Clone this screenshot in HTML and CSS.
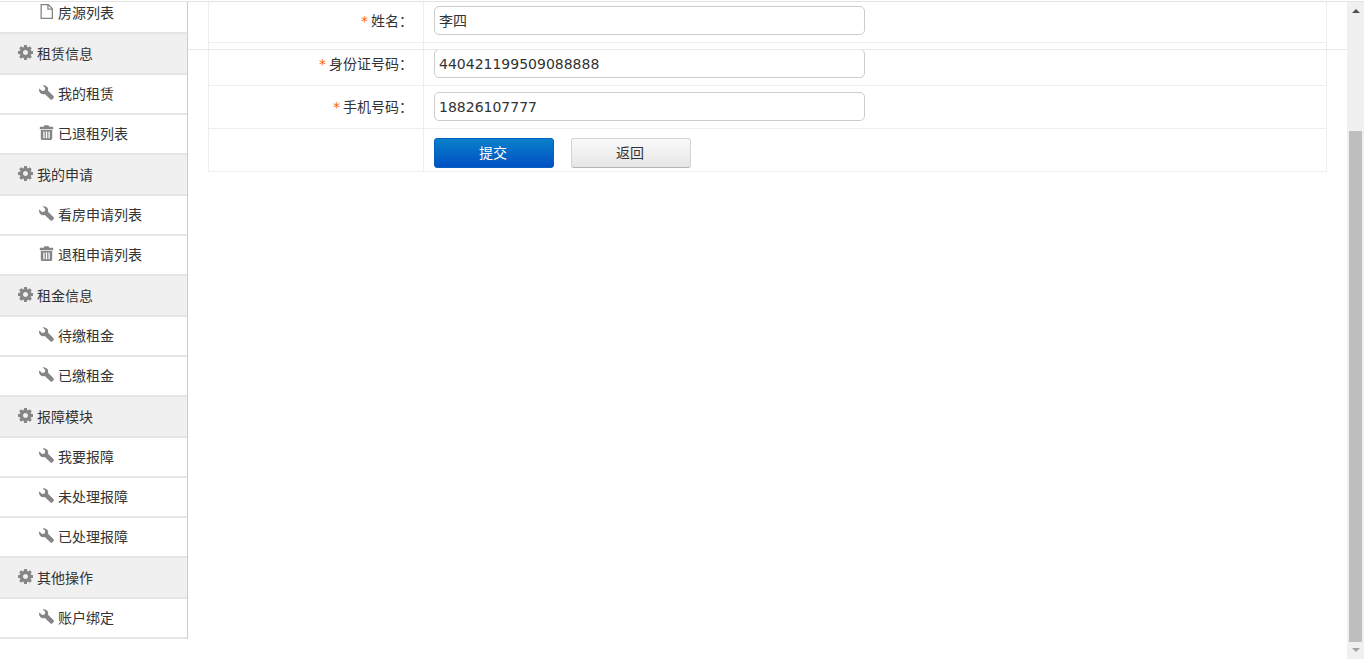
FILE: index.html
```html
<!DOCTYPE html>
<html lang="zh-CN">
<head>
<meta charset="utf-8">
<title>修改信息</title>
<link rel="stylesheet" href="styles.css">
</head>
<body>
<svg class="defs" width="0" height="0" aria-hidden="true">
  <symbol id="i-gear" viewBox="128 128 1536 1536"><path d="M1152 896q0-106-75-181t-181-75-181 75-75 181 75 181 181 75 181-75 75-181zm512-109v222q0 12-8 23t-20 13l-185 28q-19 54-39 91 35 50 107 138 10 12 10 25t-9 23q-27 37-99 108t-94 71q-12 0-26-9l-138-108q-44 23-91 38-16 136-29 186-7 28-36 28h-222q-14 0-24.500-8.500t-11.500-21.500l-28-184q-49-16-90-37l-141 107q-10 9-25 9-14 0-25-11-126-114-165-168-7-10-7-23 0-12 8-23 15-21 51-66.500t54-70.500q-27-50-41-99l-183-27q-13-2-21-12.500t-8-23.500v-222q0-12 8-23t19-13l186-28q14-46 39-92-40-57-107-138-10-12-10-24 0-10 9-23 26-36 98.500-107.500t94.500-71.500q13 0 26 10l138 107q44-23 91-38 16-136 29-186 7-28 36-28h222q14 0 24.500 8.500t11.500 21.500l28 184q49 16 90 37l142-107q9-9 24-9 13 0 25 10 129 119 165 170 7 8 7 22 0 12-8 23-15 21-51 66.500t-54 70.500q26 50 41 98l183 28q13 2 21 12.500t8 23.500z"/></symbol>
  <symbol id="i-wrench" viewBox="0 0 15 15"><path d="M4.600.2a4.300 4.300 0 0 1 4.400 5.500l5.400 5.400a1.500 1.500 0 0 1 0 2.100l-1 1a1.500 1.500 0 0 1-2.100 0L5.800 9A4.300 4.300 0 0 1 .3 3.500l2.800 2.600 2.500-.6.700-2.500L3.600.3z"/></symbol>
  <symbol id="i-trash" viewBox="0 0 14 15"><path d="M5 .2h4l.8 1.500H13a.7.700 0 0 1 .7.700V4.200H.3V2.400A.7.700 0 0 1 1 1.700h3.200zM1.300 5h11.400v8.600a1.300 1.300 0 0 1-1.300 1.300H2.600a1.300 1.300 0 0 1-1.300-1.300zM3.800 6.500v6.800h1.300V6.500zm2.500 0v6.800h1.400V6.500zm2.600 0v6.800h1.300V6.500z" fill-rule="evenodd"/></symbol>
  <symbol id="i-file" viewBox="0 0 13 15"><path d="M.5 0h8L13 4.500V15H.5zM1.800 1.300v12.400h9.900V5.800H7.300V1.300zM8.500 1.800v2.800h2.800z" fill-rule="evenodd"/></symbol>
</svg>

<div class="page">
  <nav class="sidebar">
    <ul class="menu">
      <li class="item"><svg class="icon"><use href="#i-file"/></svg>房源列表</li>
      <li class="head"><svg class="icon"><use href="#i-gear"/></svg>租赁信息</li>
      <li class="item"><svg class="icon"><use href="#i-wrench"/></svg>我的租赁</li>
      <li class="item"><svg class="icon"><use href="#i-trash"/></svg>已退租列表</li>
      <li class="head"><svg class="icon"><use href="#i-gear"/></svg>我的申请</li>
      <li class="item"><svg class="icon"><use href="#i-wrench"/></svg>看房申请列表</li>
      <li class="item"><svg class="icon"><use href="#i-trash"/></svg>退租申请列表</li>
      <li class="head"><svg class="icon"><use href="#i-gear"/></svg>租金信息</li>
      <li class="item"><svg class="icon"><use href="#i-wrench"/></svg>待缴租金</li>
      <li class="item"><svg class="icon"><use href="#i-wrench"/></svg>已缴租金</li>
      <li class="head"><svg class="icon"><use href="#i-gear"/></svg>报障模块</li>
      <li class="item"><svg class="icon"><use href="#i-wrench"/></svg>我要报障</li>
      <li class="item"><svg class="icon"><use href="#i-wrench"/></svg>未处理报障</li>
      <li class="item"><svg class="icon"><use href="#i-wrench"/></svg>已处理报障</li>
      <li class="head"><svg class="icon"><use href="#i-gear"/></svg>其他操作</li>
      <li class="item"><svg class="icon"><use href="#i-wrench"/></svg>账户绑定</li>
    </ul>
  </nav>

  <main class="content">
    <table class="form">
      <tr>
        <th><span class="req">*</span>姓名：</th>
        <td><input class="field" type="text" value="李四"></td>
      </tr>
      <tr>
        <th><span class="req">*</span>身份证号码：</th>
        <td><input class="field field-num" type="text" value="440421199509088888"></td>
      </tr>
      <tr>
        <th><span class="req">*</span>手机号码：</th>
        <td><input class="field field-num" type="text" value="18826107777"></td>
      </tr>
      <tr>
        <th></th>
        <td class="action-cell">
          <div class="actions">
            <button class="btn btn-primary" type="button">提交</button>
            <button class="btn btn-default" type="button">返回</button>
          </div>
        </td>
      </tr>
    </table>
    <div class="fixed-line"></div>
  </main>

  <div class="scrollbar" aria-hidden="true">
    <span class="arrow-up"></span>
    <span class="thumb"></span>
    <span class="arrow-down"></span>
  </div>
</div>
</body>
</html>
```
FILE: styles.css
```css
* { box-sizing: border-box; }
html, body { margin: 0; padding: 0; height: 100%; overflow: hidden; background: #fff; }
body {
  font-family: "DejaVu Sans", "Noto Sans CJK SC", sans-serif;
  font-size: 14px;
  color: #333;
  padding-top: 1px;
}
.defs { position: absolute; }

.page {
  display: flex;
  height: 658px;
  border-top: 1px solid #e2e2e2;
}

/* sidebar */
.sidebar {
  width: 188px;
  flex: none;
  height: 637px;
  overflow: hidden;
  border-right: 1px solid #ccc;
}
.menu { list-style: none; margin: -8px 0 0; padding: 0; }
.menu li {
  display: flex;
  align-items: center;
  padding-bottom: 2px;
  border-bottom: 2px solid #e5e5e5;
  color: #333;
  font-family: "Noto Sans CJK SC", sans-serif;
}
.head { height: 41px; padding-left: 18px; background: #f0f0f0; }
.item { height: 40px; padding-left: 39px; background: #fff; }
.icon {
  width: 15px;
  height: 15px;
  margin-right: 4px;
  margin-top: -1px;
  fill: #858585;
  flex: none;
}

/* content */
.content {
  position: relative;
  width: 1159px;
  flex: none;
  overflow: hidden;
  padding: 0 20px;
}
.form {
  width: 1119px;
  margin-top: -3px;
  border-collapse: collapse;
  table-layout: fixed;
}
.form th, .form td {
  height: 43px;
  padding: 0;
  border: 1px solid #eee;
  font-weight: normal;
}
.form th {
  width: 215px;
  padding-right: 10px;
  padding-bottom: 2px;
  text-align: right;
  font-family: "Noto Sans CJK SC", sans-serif;
  color: #333;
}
.form td { padding: 0 0 2px 10px; }
.form td.action-cell { padding: 6px 0 0 10px; }
.req { color: #f60; margin-right: 3px; font-family: "DejaVu Sans", sans-serif; }

.field {
  display: block;
  width: 431px;
  height: 29px;
  padding: 0 4px;
  border: 1px solid #ccc;
  border-radius: 5px;
  font: 14px "DejaVu Sans", "Noto Sans CJK SC", sans-serif;
  color: #333;
  background: #fff;
  outline: none;
}
.field-num { padding-top: 2px; }

.actions { display: flex; gap: 17px; }
.btn {
  width: 120px;
  height: 30px;
  padding: 0 2px 2px 0;
  border-radius: 3px;
  font: 14px "Noto Sans CJK SC", sans-serif;
}
.btn-primary {
  color: #fff;
  border: 1px solid #0560bd;
  background: linear-gradient(#0a80cb, #0050c2);
}
.btn-default {
  color: #333;
  border: 1px solid #d4d4d4;
  border-bottom-color: #b5b5b5;
  background: linear-gradient(#fafafa, #e6e6e6);
}

.fixed-line {
  position: absolute;
  left: 0;
  right: 0;
  top: 47px;
  height: 1px;
  background: #e8e8e8;
}

/* drawn scrollbar */
.scrollbar {
  width: 17px;
  flex: none;
  display: flex;
  flex-direction: column;
  align-items: center;
  background: #f0f0f0;
}
.thumb {
  width: 13px;
  height: 511px;
  margin-top: 118px;
  background: #bebebe;
}
.arrow-up, .arrow-down {
  width: 0;
  height: 0;
  border-left: 4px solid transparent;
  border-right: 4px solid transparent;
}
.arrow-up { margin-top: 7px; border-bottom: 4px solid #505050; }
.arrow-down { margin-top: 6px; border-top: 4px solid #a3a3a3; }
```
